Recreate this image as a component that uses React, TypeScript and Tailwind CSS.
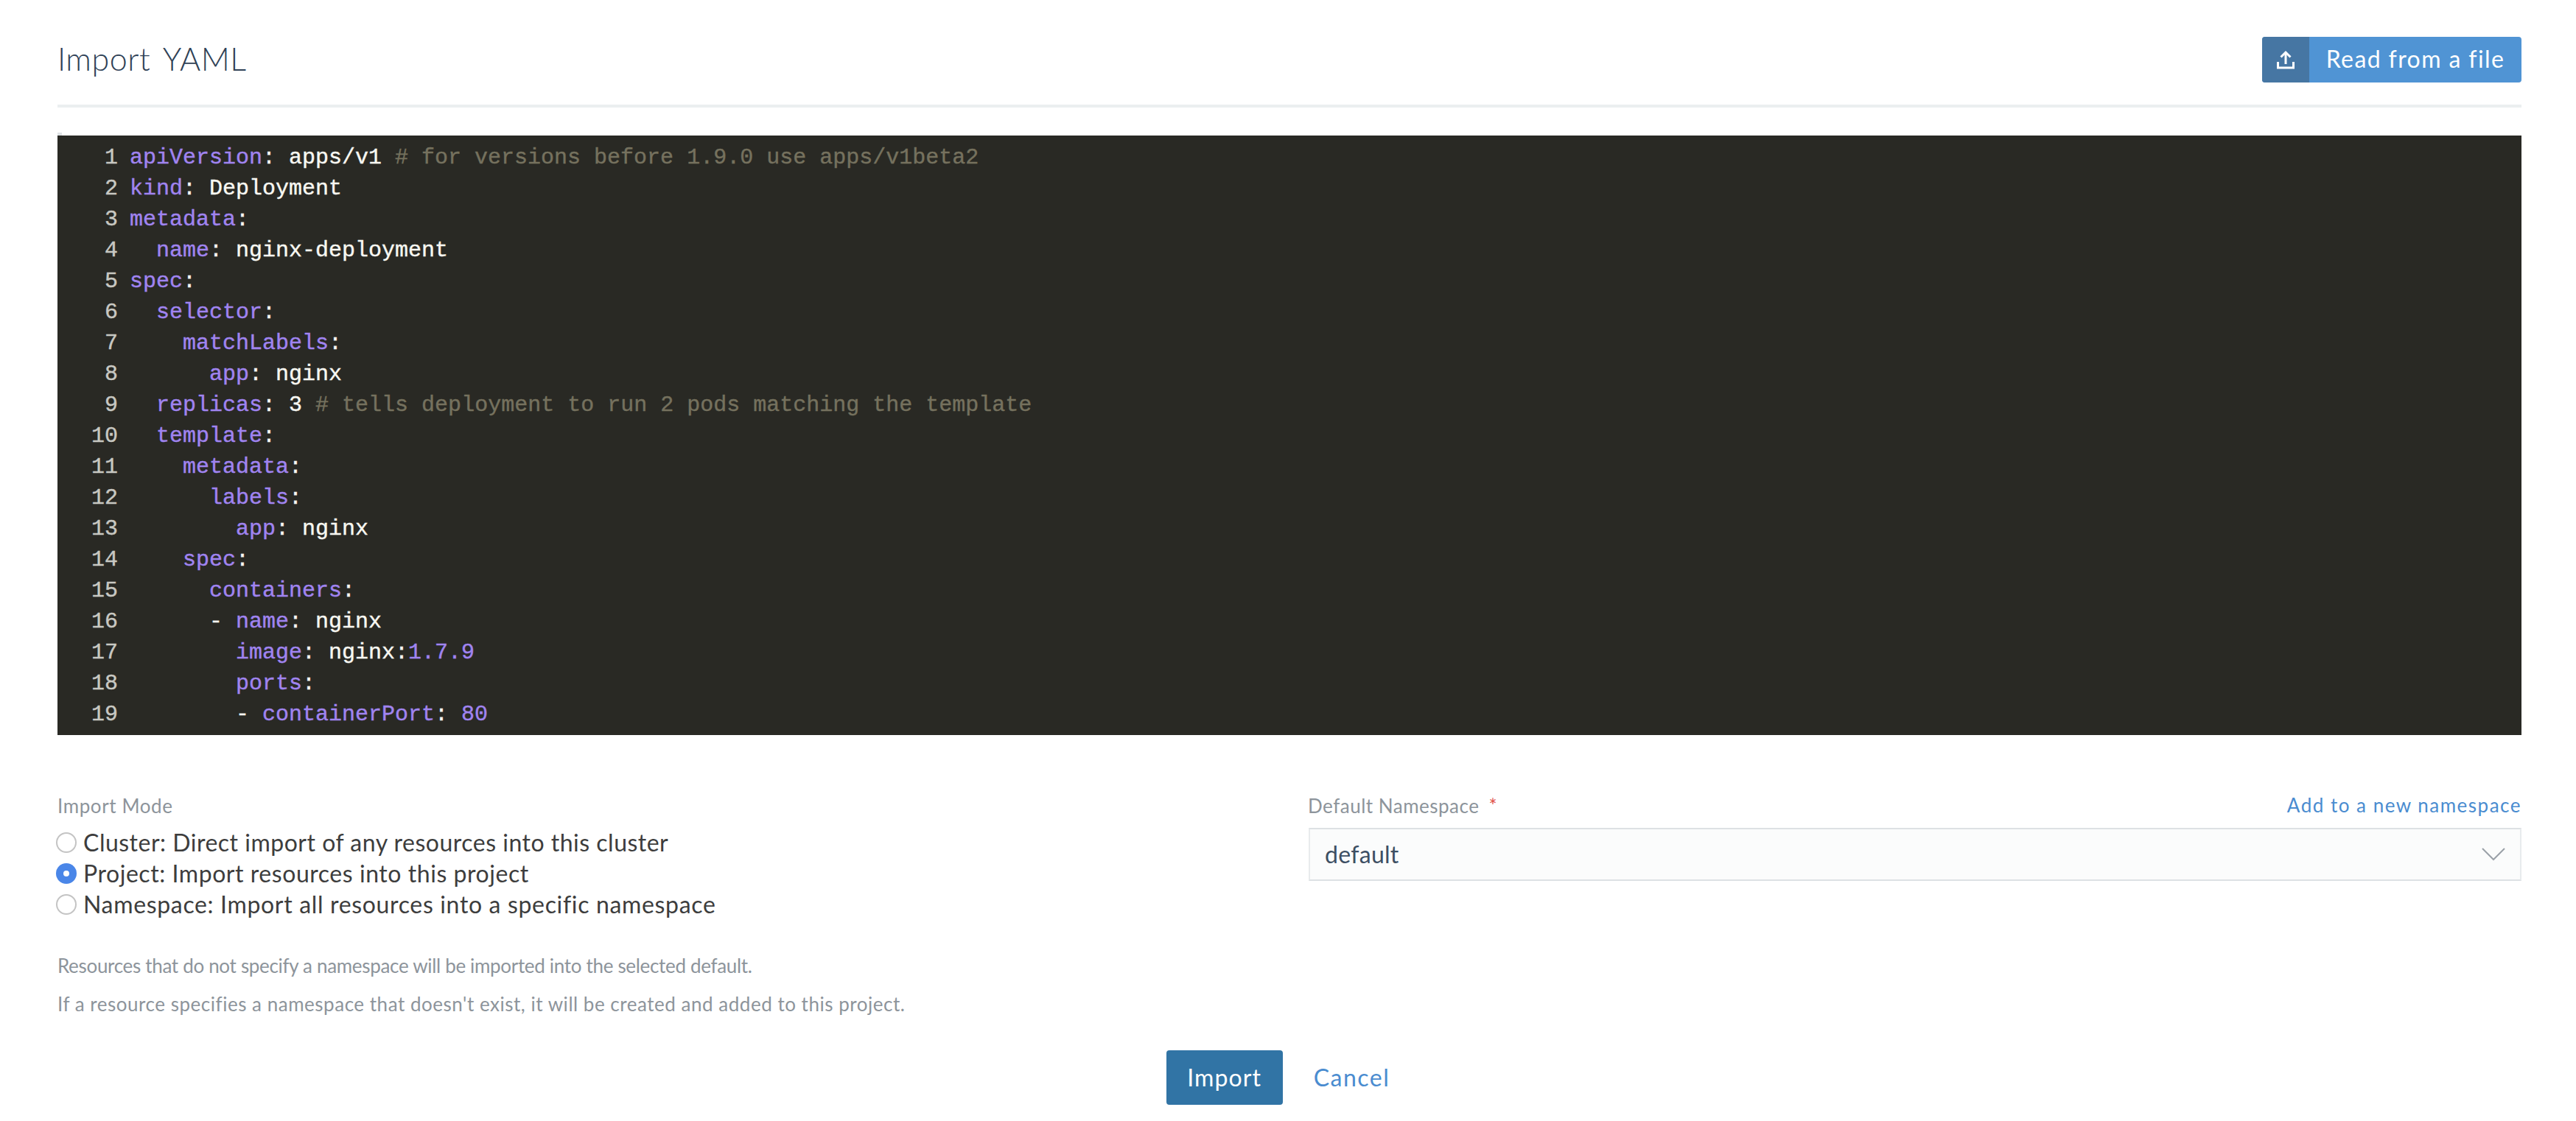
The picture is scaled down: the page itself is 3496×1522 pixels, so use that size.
type Tok = [string, 'k' | 't' | 'n' | 'c'];

const tone = {
  k: 'text-[#a084f0]',
  t: 'text-[#f8f8f2]',
  n: 'text-[#a084f0]',
  c: 'text-[#75715e]',
};

const yaml: Tok[][] = [
  [['apiVersion', 'k'], [': apps/v1 ', 't'], ['# for versions before 1.9.0 use apps/v1beta2', 'c']],
  [['kind', 'k'], [': Deployment', 't']],
  [['metadata', 'k'], [':', 't']],
  [['  ', 't'], ['name', 'k'], [': nginx-deployment', 't']],
  [['spec', 'k'], [':', 't']],
  [['  ', 't'], ['selector', 'k'], [':', 't']],
  [['    ', 't'], ['matchLabels', 'k'], [':', 't']],
  [['      ', 't'], ['app', 'k'], [': nginx', 't']],
  [['  ', 't'], ['replicas', 'k'], [': ', 't'], ['3', 't'], [' ', 't'], ['# tells deployment to run 2 pods matching the template', 'c']],
  [['  ', 't'], ['template', 'k'], [':', 't']],
  [['    ', 't'], ['metadata', 'k'], [':', 't']],
  [['      ', 't'], ['labels', 'k'], [':', 't']],
  [['        ', 't'], ['app', 'k'], [': nginx', 't']],
  [['    ', 't'], ['spec', 'k'], [':', 't']],
  [['      ', 't'], ['containers', 'k'], [':', 't']],
  [['      - ', 't'], ['name', 'k'], [': nginx', 't']],
  [['        ', 't'], ['image', 'k'], [': nginx:', 't'], ['1.7.9', 'n']],
  [['        ', 't'], ['ports', 'k'], [':', 't']],
  [['        - ', 't'], ['containerPort', 'k'], [': ', 't'], ['80', 'n']],
];

const modes = [
  { label: 'Cluster: Direct import of any resources into this cluster', checked: false, track: 'tracking-[0.5px]' },
  { label: 'Project: Import resources into this project', checked: true, track: 'tracking-[0.55px]' },
  { label: 'Namespace: Import all resources into a specific namespace', checked: false, track: 'tracking-[0.66px]' },
];

function Radio({ checked }: { checked: boolean }) {
  if (checked) {
    return (
      <span className="flex h-[28px] w-[28px] items-center justify-center rounded-full bg-[#4a86e8]">
        <span className="h-[8px] w-[8px] rounded-full bg-white" />
      </span>
    );
  }
  return <span className="h-[28px] w-[28px] rounded-full border-2 border-[#c4c4c4] bg-white" />;
}

export default function App() {
  return (
    <div className="min-h-[1522px] bg-white pl-[78px] pr-[74px] pt-[50px] font-['Lato','Liberation_Sans',sans-serif] text-[#3d3d3d]">
      <header className="flex h-[62px] items-center justify-between">
        <h1 className="pb-[2px] text-[43px] font-light tracking-[0.5px] text-[#2f4156] [word-spacing:6px]">Import YAML</h1>
        <button className="flex h-[62px] w-[352px] overflow-hidden rounded-[4px] bg-[#5094d4] text-[32px] text-white">
          <span className="flex h-full w-[64px] items-center justify-center bg-[#4676a3]">
            <svg width="24" height="26" viewBox="0 0 24 26" fill="none" stroke="white" strokeWidth="3">
              <path d="M12 19V3" />
              <path d="M5.5 9.5L12 3l6.5 6.5" />
              <path d="M1.5 16v8h21v-8" />
            </svg>
          </span>
          <span className="flex-1 text-center leading-[60px] tracking-[1.4px]">Read from a file</span>
        </button>
      </header>

      <div className="mt-[30px] h-[4px] bg-[#ebeff0]" />
      <div className="mt-[34px] h-[4px] w-[6px] bg-[#dfe3e5]" />

      <div className="bg-[#292924] pb-[7px] pt-[9px] font-['Liberation_Mono',monospace] text-[30px] leading-[42px] [-webkit-text-stroke:0.4px]">
        {yaml.map((line, i) => (
          <div key={i} className="flex whitespace-pre">
            <span className="w-[82px] text-right text-[#c8c8c2]">{i + 1}</span>
            <span className="ml-[16px]">
              {line.map(([text, kind], j) => (
                <span key={j} className={tone[kind]}>
                  {text}
                </span>
              ))}
            </span>
          </div>
        ))}
      </div>

      <div className="mt-[78px] grid grid-cols-2 gap-x-[52px]">
        <div>
          <div className="h-[36px] text-[26px] leading-[36px] tracking-[0.6px] text-[#8d949b]">Import Mode</div>
          <div className="mt-[11px]">
            {modes.map((m) => (
              <label key={m.label} className={`-ml-[2px] flex h-[42px] items-center gap-[9px] text-[32px] ${m.track}`}>
                <Radio checked={m.checked} />
                {m.label}
              </label>
            ))}
          </div>
        </div>
        <div>
          <div className="flex h-[36px] items-center justify-between text-[26px] leading-[36px]">
            <span className="-ml-[1px] tracking-[0.5px] text-[#8d949b]">
              Default Namespace <span className="ml-[6px] text-[#e0534a]">*</span>
            </span>
            <a className="pb-[2px] tracking-[1.5px] text-[#4a8cd0]">Add to a new namespace</a>
          </div>
          <div className="mt-[12px] flex h-[72px] items-center justify-between border-2 border-x-[#e8ebed] border-y-[#dde1e4] bg-[#fbfcfc] pl-[20px] pr-[20px]">
            <span className="text-[32px] tracking-[0.3px] text-[#3d4f63]">default</span>
            <svg width="32" height="18" viewBox="0 0 32 18" fill="none" stroke="#9aa1a8" strokeWidth="2">
              <path d="M1 1l15 15L31 1" />
            </svg>
          </div>
        </div>
      </div>

      <div className="mt-[36px] text-[26px] leading-[52px] text-[#8d949b]">
        <p className="tracking-[-0.32px]">Resources that do not specify a namespace will be imported into the selected default.</p>
        <p className="tracking-[0.52px]">If a resource specifies a namespace that doesn't exist, it will be created and added to this project.</p>
      </div>

      <div className="mt-[37px] flex justify-center">
        <button className="h-[74px] w-[158px] rounded-[4px] bg-[#3174a5] text-[32px] tracking-[1.1px] text-white">Import</button>
        <a className="ml-[15px] pl-[27px] pr-[31px] text-[32px] leading-[74px] tracking-[1.5px] text-[#4a8cd0]">Cancel</a>
      </div>
    </div>
  );
}
